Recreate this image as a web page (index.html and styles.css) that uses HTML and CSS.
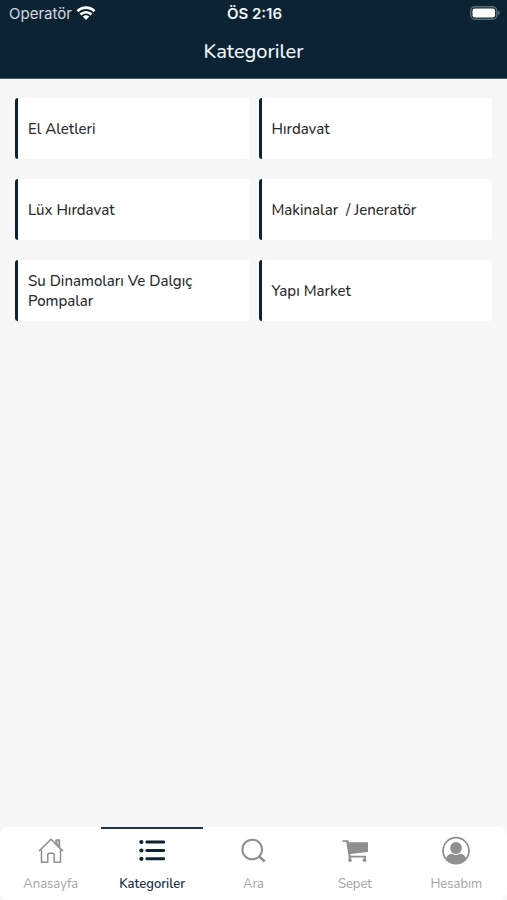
FILE: index.html
```html
<!DOCTYPE html>
<html lang="tr">
<head>
<meta charset="utf-8">
<meta name="viewport" content="width=device-width, initial-scale=1">
<title>Kategoriler</title>
<link rel="stylesheet" href="styles.css">
</head>
<body>
<header class="header">
  <div class="status">
    <div class="carrier">
      <span>Operatör</span>
      <svg class="wifi" viewBox="0 0 20 14" aria-hidden="true">
        <path d="M1.500 5.200a12 12 0 0 1 17 0M4.500 8.500a7.800 7.800 0 0 1 11 0" fill="none" stroke="currentColor" stroke-width="2.700"/>
        <path d="M10 14l-3.300-3.400a4.700 4.700 0 0 1 6.600 0z" fill="currentColor"/>
      </svg>
    </div>
    <span class="clock">ÖS 2:16</span>
    <svg class="battery" viewBox="0 0 30 14" aria-hidden="true">
      <rect x="0.8" y="0.8" width="26" height="12.400" rx="4" fill="none" stroke="#5d6c79" stroke-width="1.400"/>
      <rect x="2.500" y="2.500" width="22.600" height="9" rx="2.200" fill="#fff"/>
      <path d="M28 4.800q2 .7 2 2.200t-2 2.200z" fill="#5d6c79"/>
    </svg>
  </div>
  <h1 class="title">Kategoriler</h1>
</header>
<main class="grid">
  <a class="card" href="#">El Aletleri</a>
  <a class="card" href="#">Hırdavat</a>
  <a class="card" href="#">Lüx Hırdavat</a>
  <a class="card" href="#">Makinalar&nbsp; / Jeneratör</a>
  <a class="card" href="#">Su Dinamoları Ve Dalgıç Pompalar</a>
  <a class="card" href="#">Yapı Market</a>
</main>
<nav class="tabs">
  <a class="tab" href="#">
    <svg class="icon" viewBox="0 0 30 30" fill="none" stroke="currentColor" stroke-width="1.500" stroke-linejoin="round" aria-hidden="true">
      <path d="M5.500 13.500V26.300h6.300v-7.500q0-1.500 1.500-1.500h3.400q1.500 0 1.500 1.500v7.500h6.300V13.500"/>
      <path d="M3.500 14.600L15 3.300l11.500 11.300" stroke-linecap="round"/>
      <path d="M20 7.900V4.100h3.400v7z" fill="currentColor" fill-opacity=".45"/>
    </svg>
    <span>Anasayfa</span>
  </a>
  <a class="tab active" href="#" aria-current="page">
    <svg class="icon" viewBox="0 0 30 30" fill="currentColor" aria-hidden="true">
      <circle cx="4.400" cy="6" r="2.100"/><circle cx="4.400" cy="14.500" r="2.100"/><circle cx="4.400" cy="22.800" r="2.100"/>
      <rect x="8.500" y="4.500" width="19.500" height="3" rx="1.200"/><rect x="8.500" y="13" width="19.500" height="3" rx="1.200"/><rect x="8.500" y="21.300" width="19.500" height="3" rx="1.200"/>
    </svg>
    <span>Kategoriler</span>
  </a>
  <a class="tab" href="#">
    <svg class="icon" viewBox="0 0 30 30" fill="none" stroke="currentColor" stroke-width="2" aria-hidden="true">
      <circle cx="14.200" cy="13.500" r="9.800"/><path d="M21.200 20.500l5.500 5" stroke-width="2.500"/>
    </svg>
    <span>Ara</span>
  </a>
  <a class="tab" href="#">
    <svg class="icon" viewBox="0 0 30 30" fill="currentColor" aria-hidden="true">
      <path d="M2.500 4.300h5.800l.7 2H28v9.700L10.300 18l.5 1.800H26v1.800H8.800L6.200 6H2.500z"/>
      <path d="M8.800 20h2.200v4.500H8.800zM23.700 20.500h1.900v4h-1.900z"/>
      <circle cx="10" cy="24.300" r="1.800"/><circle cx="24.600" cy="24.300" r="1.800"/>
    </svg>
    <span>Sepet</span>
  </a>
  <a class="tab" href="#">
    <svg class="icon" viewBox="0 0 30 30" aria-hidden="true">
      <circle cx="15" cy="14.700" r="13" fill="none" stroke="currentColor" stroke-width="1.700"/>
      <circle cx="15" cy="12" r="5.900" fill="currentColor"/>
      <path d="M5 22.500q1.300-4 5.300-5 4.700 2.900 9.400 0 4 1 5.300 5Q20.500 27.700 15 27.700T5 22.500z" fill="currentColor"/>
    </svg>
    <span>Hesabım</span>
  </a>
</nav>
</body>
</html>
```
FILE: styles.css
```css
* { box-sizing: border-box; }

body {
  margin: 0;
  min-height: 100vh;
  display: flex;
  flex-direction: column;
  background: #f7f7f7;
  color: #2b2b2e;
  font-family: Nunito, "Noto Sans", sans-serif;
}

a { color: inherit; text-decoration: none; }
svg { display: block; }

.header {
  background: #0c2333;
  color: #f1f5f8;
  border-bottom: 1px solid #49677c;
}

.status {
  display: grid;
  grid-template-columns: 1fr auto 1fr;
  align-items: center;
  height: 26px;
  padding: 0 7px 0 9px;
  font-family: Inter, sans-serif;
  font-size: 15px;
}

.carrier {
  display: flex;
  align-items: center;
  gap: 4px;
  color: #d3dae0;
}

.wifi { width: 20px; height: 14px; color: #fff; }
.clock { font-weight: 600; }
.battery { width: 30px; height: 14px; justify-self: end; }

.title {
  margin: 0;
  padding: 12px 0;
  font-size: 20px;
  line-height: 28px;
  font-weight: 500;
  text-align: center;
}

.grid {
  flex: 1;
  display: grid;
  grid-template-columns: 1fr 1fr;
  align-content: start;
  gap: 20px 10px;
  padding: 19px 15px;
}

.card {
  display: flex;
  align-items: center;
  min-height: 61px;
  padding: 10px 40px 10px 10px;
  background: #fff;
  border-left: 3px solid #0c2333;
  border-radius: 3px;
  font-size: 15px;
  line-height: 20px;
  font-weight: 500;
}

.tabs {
  display: grid;
  grid-template-columns: repeat(5, 1fr);
  height: 73px;
  background: #fff;
  border-radius: 8px;
  color: #a3a3a3;
}

.tab {
  display: flex;
  flex-direction: column;
  align-items: center;
  gap: 8px;
  padding-top: 7px;
  border-top: 2px solid transparent;
  font-size: 13px;
  line-height: 20px;
}

.icon { width: 30px; height: 30px; color: #8f8f8f; }
.active { color: #1d3347; border-color: #1d3347; font-weight: 600; }
.active .icon { color: #0c2333; }
```
